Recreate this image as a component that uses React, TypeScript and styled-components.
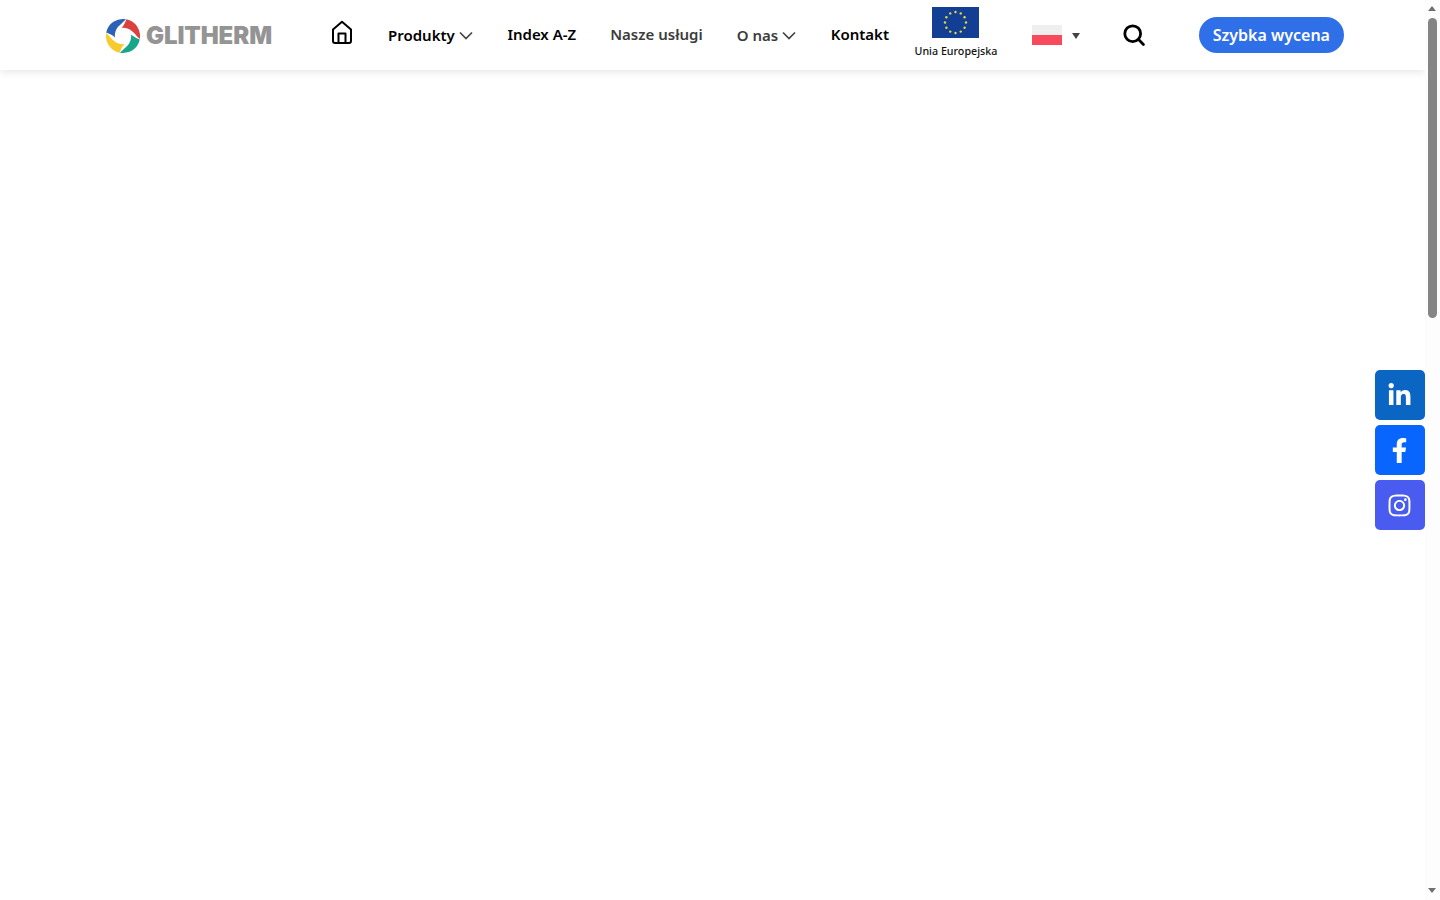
import React from "react";
import styled, { createGlobalStyle } from "styled-components";
import { FaFacebookF, FaLinkedinIn, FaInstagram } from "react-icons/fa";

const GlobalStyle = createGlobalStyle`
  html, body {
    margin: 0;
    padding: 0;
    height: 100%;
    overflow: hidden;
    background: #fff;
    font-family: "Noto Sans", "Open Sans", sans-serif;
  }
`;

const Page = styled.div`
  display: flex;
  height: 900px;
`;

const Main = styled.div`
  flex: 1;
  min-width: 0;
`;

const Header = styled.header`
  display: flex;
  align-items: center;
  height: 70px;
  padding-left: 106px;
  background: #fff;
  box-shadow: 0 2px 8px rgba(0, 0, 0, 0.1);
`;

const Logo = styled.a`
  display: flex;
  align-items: center;
  gap: 6px;
  width: 166px;
  margin-top: 2px;
`;

const LogoText = styled.span`
  font-family: Inter, sans-serif;
  font-weight: 900;
  font-size: 24px;
  letter-spacing: -0.1px;
  line-height: 1;
  color: #949494;
`;

const HomeLink = styled.a`
  display: flex;
  margin: -6px 0 0 58px;
`;

const Nav = styled.nav`
  display: flex;
  align-items: center;
  gap: 34px;
  margin-left: 34px;
`;

const NavItem = styled.a<{ $muted?: boolean; $low?: boolean }>`
  display: flex;
  align-items: center;
  gap: 4px;
  font-size: 15px;
  font-weight: 600;
  line-height: 20px;
  color: ${({ $muted }) => ($muted ? "#3c3c3c" : "#000")};
  margin-top: ${({ $low }) => ($low ? "0" : "-2px")};
  white-space: nowrap;
`;

const EuBlock = styled.div`
  display: flex;
  flex-direction: column;
  align-items: center;
  gap: 6px;
  margin: -4px -0.5px 0 25.5px;
`;

const EuLabel = styled.span`
  font-size: 10.7px;
  font-weight: 500;
  line-height: 15px;
  color: #111;
  white-space: nowrap;
`;

const LangPicker = styled.div`
  display: flex;
  align-items: center;
  gap: 10px;
  margin-left: 35px;
`;

const PolishFlag = styled.span`
  display: block;
  width: 30px;
  height: 20px;
  background: linear-gradient(#efefef 50%, #f9495c 50%);
`;

const Caret = styled.span`
  width: 0;
  height: 0;
  margin-top: 1px;
  border-left: 4px solid transparent;
  border-right: 4px solid transparent;
  border-top: 6px solid #444;
`;

const SearchButton = styled.a`
  display: flex;
  margin-left: 43px;
`;

const QuoteButton = styled.a`
  display: flex;
  align-items: center;
  justify-content: center;
  width: 145px;
  height: 36px;
  margin-left: 54px;
  border-radius: 18px;
  background: #2f6fe8;
  color: #fff;
  font-size: 16px;
  font-weight: 600;
  white-space: nowrap;
`;

const Scrollbar = styled.div`
  position: relative;
  width: 15px;
  height: 100%;
  background: #fdfdfd;
`;

const ScrollThumb = styled.div`
  position: absolute;
  top: 18px;
  left: 3px;
  width: 9px;
  height: 300px;
  border-radius: 5px;
  background: #858585;
`;

const ScrollArrow = styled.span<{ $down?: boolean }>`
  position: absolute;
  left: 3px;
  ${({ $down }) => ($down ? "bottom: 7px;" : "top: 6px;")}
  border-left: 4.5px solid transparent;
  border-right: 4.5px solid transparent;
  ${({ $down }) =>
    $down ? "border-top: 5px solid #707070;" : "border-bottom: 5px solid #707070;"}
`;

const Socials = styled.div`
  position: fixed;
  top: 370px;
  right: 15px;
  display: flex;
  flex-direction: column;
  gap: 5px;
`;

const SocialLink = styled.a<{ $bg: string }>`
  display: flex;
  align-items: center;
  justify-content: center;
  width: 50px;
  height: 50px;
  padding-right: 1px;
  box-sizing: border-box;
  border-radius: 5px;
  background: ${({ $bg }) => $bg};
  color: #fff;
  font-size: 25px;
`;

const Chevron = () => (
  <svg width="14.6" height="9" viewBox="0 0 14.6 9" fill="none">
    <path d="M1 1.5l6 6 6-6" stroke="#444" strokeWidth="1.7" />
  </svg>
);

const blade =
  "M-16.8 -3.5A17.1 17.1 0 0 1 3 -16.8C-1 -12.5 -6 -9.5 -7.5 -4.5C-8.2 -2 -8.3 -0.5 -8 1.5C-10.5 -1 -13.5 -2 -16.8 -3.5Z";

const LogoMark = () => (
  <svg width="34" height="36" viewBox="-17 -18 34 36">
    <path d={blade} fill="#2b62b5" />
    <path d={blade} fill="#d9423f" transform="rotate(90)" />
    <path d={blade} fill="#17a689" transform="rotate(180)" />
    <path d={blade} fill="#f7cb2d" transform="rotate(270)" />
  </svg>
);

const HomeIcon = () => (
  <svg width="24" height="25" viewBox="0 0 24 25" fill="none" stroke="#000" strokeWidth="2" strokeLinejoin="round">
    <path d="M3 9.5L12 1.8l9 7.7v11.5a2 2 0 0 1-2 2H5a2 2 0 0 1-2-2z" />
    <path d="M8.5 23v-9.5h7V23" />
  </svg>
);

const SearchIcon = () => (
  <svg width="22" height="22" viewBox="0 0 22 22" fill="none" stroke="#000" strokeWidth="2.8" strokeLinecap="round">
    <circle cx="9.7" cy="9.7" r="7.9" />
    <path d="M15.6 15.6l4.8 4.8" />
  </svg>
);

const stars = Array.from({ length: 12 }, (_, i) => {
  const a = (i * Math.PI) / 6;
  return { x: 23.5 + 10.5 * Math.sin(a), y: 15.5 - 10.5 * Math.cos(a) };
});

const EuFlag = () => (
  <svg width="47" height="31" viewBox="0 0 47 31">
    <rect width="47" height="31" fill="#123f94" />
    {stars.map((s) => (
      <circle key={`${s.x}-${s.y}`} cx={s.x} cy={s.y} r="1.2" fill="#e8d83a" />
    ))}
  </svg>
);

const App = () => (
  <>
    <GlobalStyle />
    <Page>
      <Main>
        <Header>
          <Logo>
            <LogoMark />
            <LogoText>GLITHERM</LogoText>
          </Logo>
          <HomeLink>
            <HomeIcon />
          </HomeLink>
          <Nav>
            <NavItem $low>
              Produkty <Chevron />
            </NavItem>
            <NavItem>Index A-Z</NavItem>
            <NavItem $muted>Nasze usługi</NavItem>
            <NavItem $muted $low>
              O nas <Chevron />
            </NavItem>
            <NavItem>Kontakt</NavItem>
          </Nav>
          <EuBlock>
            <EuFlag />
            <EuLabel>Unia Europejska</EuLabel>
          </EuBlock>
          <LangPicker>
            <PolishFlag />
            <Caret />
          </LangPicker>
          <SearchButton>
            <SearchIcon />
          </SearchButton>
          <QuoteButton>Szybka wycena</QuoteButton>
        </Header>
      </Main>
      <Scrollbar>
        <ScrollArrow />
        <ScrollThumb />
        <ScrollArrow $down />
      </Scrollbar>
    </Page>
    <Socials>
      <SocialLink $bg="#0a66c2">
        <FaLinkedinIn />
      </SocialLink>
      <SocialLink $bg="#0866ff">
        <FaFacebookF />
      </SocialLink>
      <SocialLink $bg="#4a5cf0">
        <FaInstagram />
      </SocialLink>
    </Socials>
  </>
);

export default App;
